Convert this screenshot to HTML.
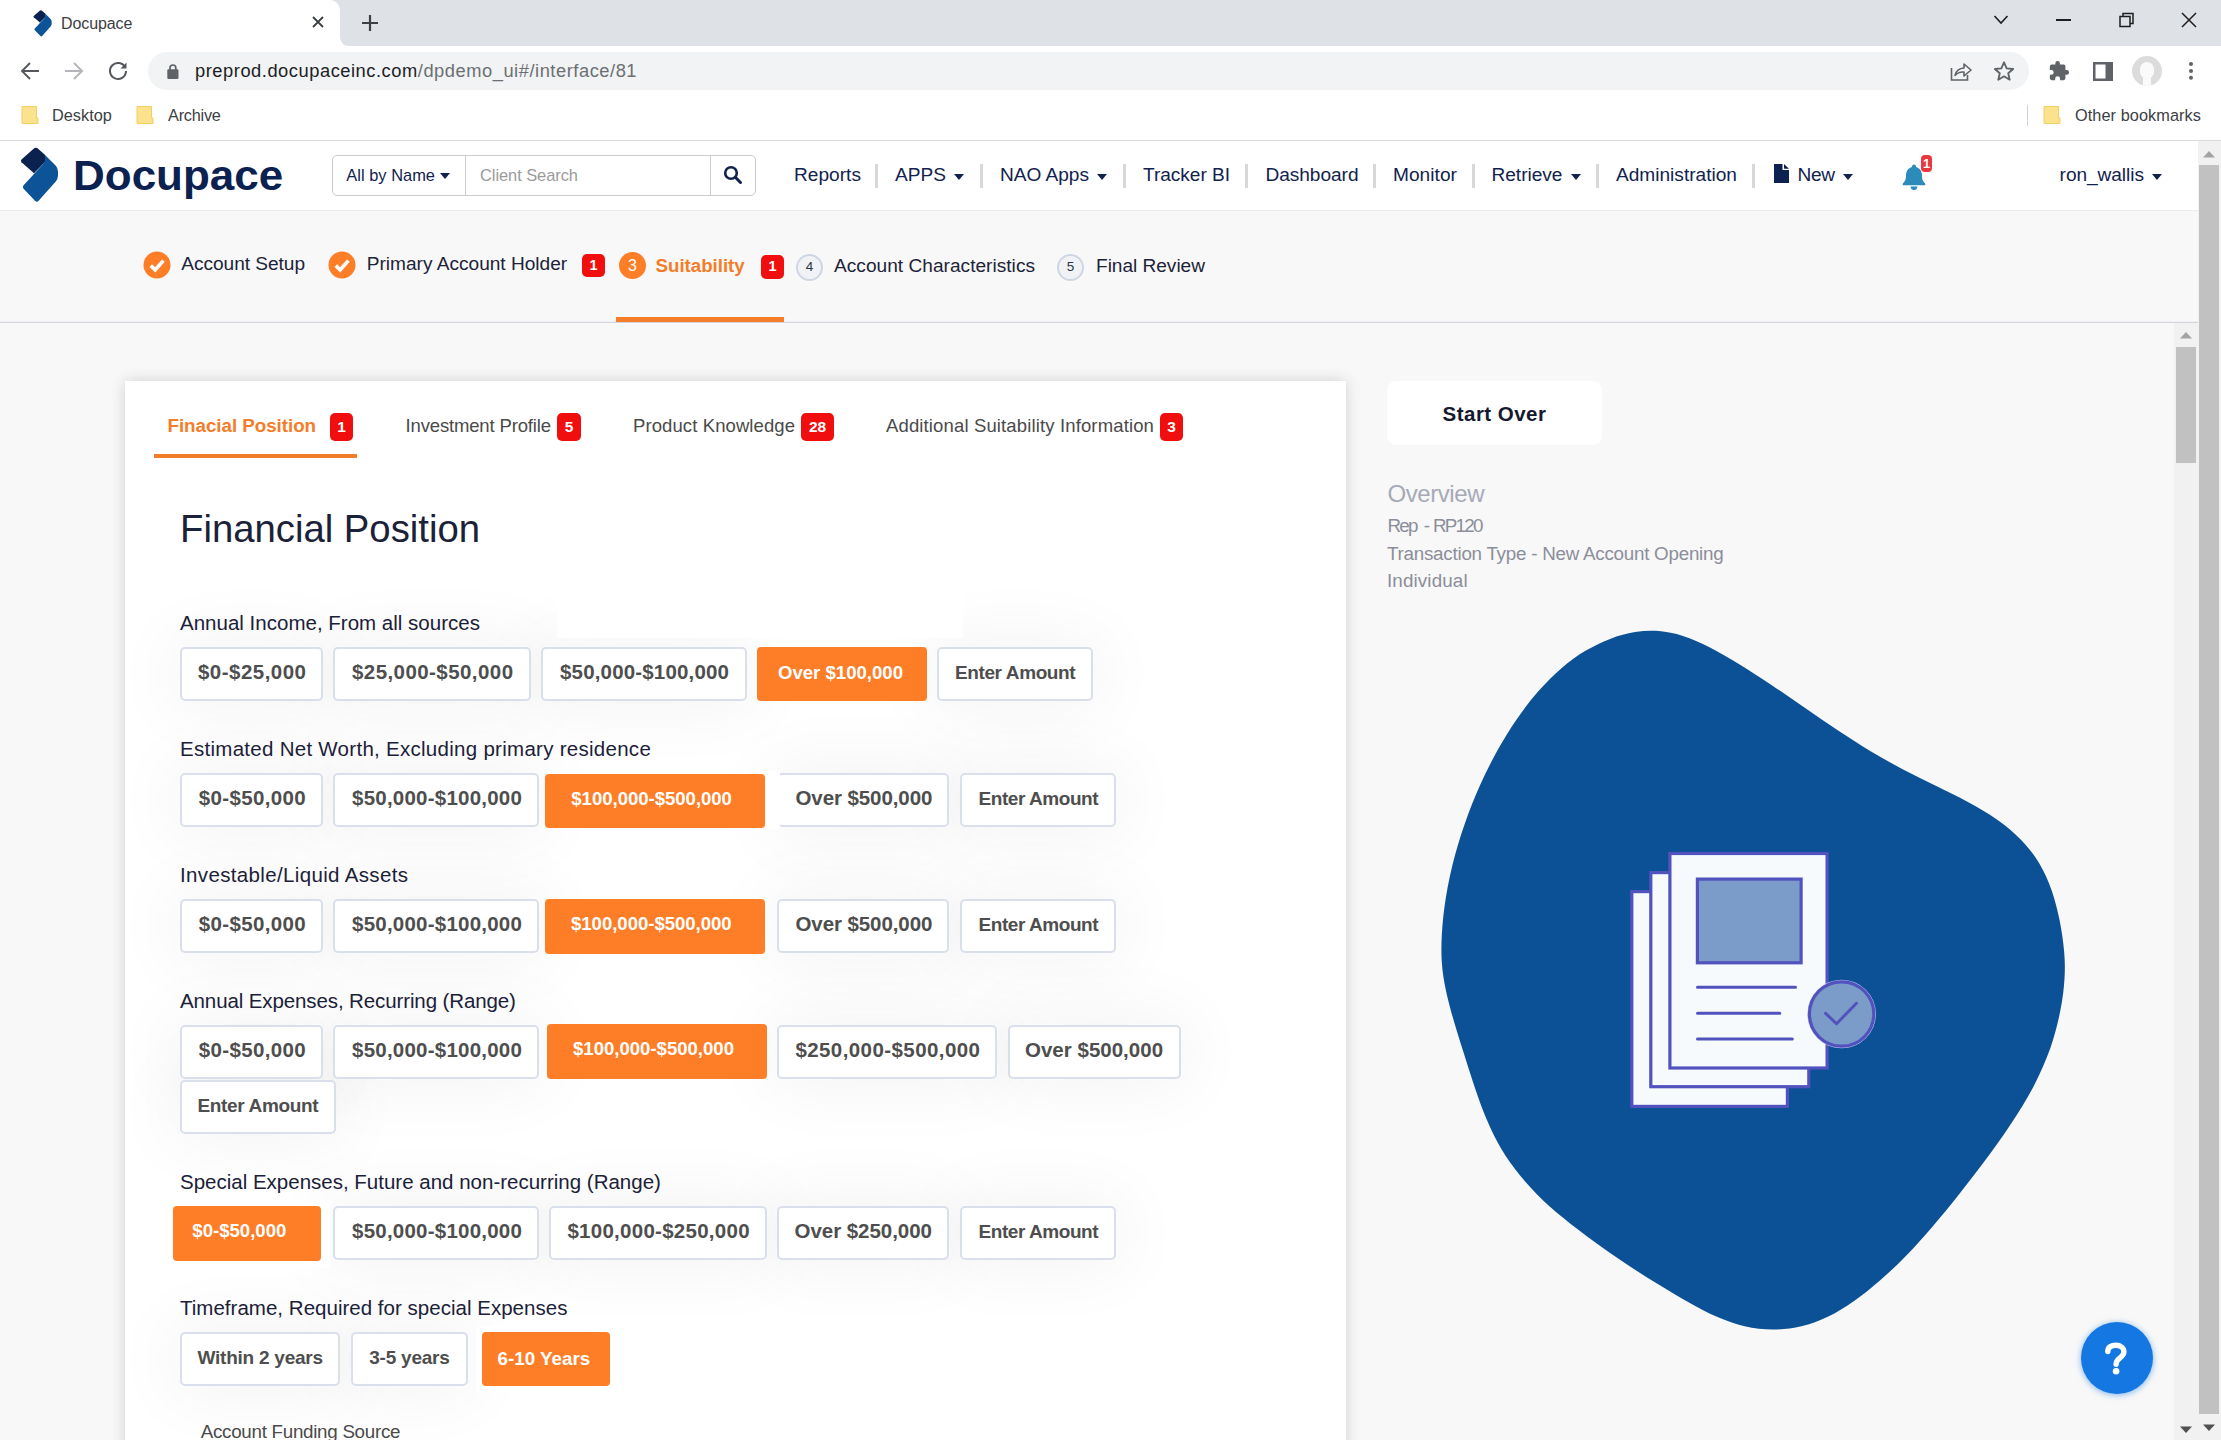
<!DOCTYPE html>
<html>
<head>
<meta charset="utf-8">
<title>Docupace</title>
<style>
*{box-sizing:border-box;margin:0;padding:0}
html,body{width:2221px;height:1440px;overflow:hidden;background:#f8f8f8;font-family:"Liberation Sans",sans-serif;}
.a{position:absolute;white-space:nowrap}
#root{position:absolute;left:0;top:0;width:2221px;height:1440px;overflow:hidden;background:#f8f8f8}
#tabbar{left:0;top:0;width:2221px;height:46.5px;background:#dee1e6}
#tab{left:0;top:0;width:340px;height:47px;background:#fff;border-radius:0 10px 0 0}
#toolbar{left:0;top:46px;width:2221px;height:94px;background:#fff}
#urlpill{left:148px;top:52px;width:1881px;height:38px;border-radius:19px;background:#f1f3f4}
#hdr{left:0;top:141px;width:2198px;height:69px;background:#fff}
.sep{width:2.5px;height:24px;top:163.5px;background:#d8d8d8}
.caret{width:0;height:0;border-left:5.5px solid transparent;border-right:5.5px solid transparent;border-top:6px solid #11224d}
.badge{background:#f00e0e;color:#fff;font-weight:bold;border-radius:5px;text-align:center}
#card{left:125px;top:381px;width:1221px;height:1100px;background:#fff;box-shadow:0 0 14px rgba(0,0,0,.16)}
.b{border:2px solid #d9dfeb;border-radius:5px;background:#fff;color:#4e4e4e;font-weight:bold;text-align:left;}
.sh{border-radius:5px;box-shadow:0 0 70px 8px rgba(0,0,0,.05)}
.o{border-radius:4px;background:#fd7e27;color:#fff;font-weight:bold;text-align:left}
</style>
</head>
<body>
<div id="root">

<div class="a" id="tabbar"></div>
<div class="a" id="tab"></div>
<svg class="a" style="left:340px;top:36px" width="10" height="10"><path d="M0 10 L0 0 Q0 10 10 10 Z" fill="#fff"/></svg>
<svg class="a" style="left:33.200px;top:10px" width="19.200" height="27.200" viewBox="20.500 147.500 38 55.500"><path d="M21.5 159.600 L33.600 148.800 Q36 146.800 38.400 148.900 L44.500 154.600 Q47.200 158.500 44.600 162.400 L34 173.200 L21.500 162.200 Q20.200 160.900 21.500 159.600 Z" fill="#0b2150"/><path d="M41 151 L55.800 165.800 Q58 168.200 58 171.500 L58 175.500 Q58 178.800 55.800 181.400 L38.600 200.800 Q36.800 202.800 35 200.800 L23.600 188.800 Q22 187 23.600 185.200 L43 164.200 Q47.500 158.500 43.500 153.500 Z" fill="#0c5497"/></svg>
<div class="a" style="left:61px;top:13.71px;font-size:16px;line-height:20px;color:#3c4043;letter-spacing:-0.09px;">Docupace</div>

<svg class="a" style="left:311px;top:15px" width="14" height="14"><path d="M2 2 L12 12 M12 2 L2 12" stroke="#3c4043" stroke-width="1.8" fill="none"/></svg>
<svg class="a" style="left:361px;top:14px" width="18" height="18"><path d="M9 1 V17 M1 9 H17" stroke="#3c4043" stroke-width="2.2" fill="none"/></svg>
<svg class="a" style="left:1993px;top:14px" width="16" height="12"><path d="M1.5 2 L8 9 L14.5 2" stroke="#1f1f1f" stroke-width="1.6" fill="none"/></svg>
<div class="a" style="left:2056px;top:19.200px;width:14.500px;height:1.600px;background:#1f1f1f"></div>
<svg class="a" style="left:2119px;top:12px" width="16" height="16"><path d="M1 4.5 H11 V14.500 H1 Z M4 4.500 V1.500 H14 V11.500 H11" stroke="#1f1f1f" stroke-width="1.5" fill="none"/></svg>
<svg class="a" style="left:2181px;top:12px" width="16" height="16"><path d="M1 1 L15 15 M15 1 L1 15" stroke="#1f1f1f" stroke-width="1.5" fill="none"/></svg>
<div class="a" id="toolbar"></div>
<svg class="a" style="left:20px;top:61px" width="20" height="20"><path d="M19 10 H2.5 M10 2 L2 10 L10 18" stroke="#55585c" stroke-width="1.900" fill="none"/></svg>
<svg class="a" style="left:64px;top:61px" width="20" height="20"><path d="M1 10 H17.500 M10 2 L18 10 L10 18" stroke="#b4b6b9" stroke-width="2" fill="none"/></svg>
<svg class="a" style="left:107px;top:60px" width="22" height="22" viewBox="0 0 22 22"><path d="M18.200 7.500 A8 8 0 1 0 19 11" stroke="#55585c" stroke-width="2" fill="none"/><path d="M19.500 2.500 V8.500 H13.500 Z" fill="#55585c"/></svg>
<div class="a" id="urlpill"></div>
<svg class="a" style="left:166.500px;top:64px" width="12" height="16" viewBox="0 0 12 16"><rect x="0.300" y="5.300" width="11.200" height="9.700" rx="1.300" fill="#5f6368"/><path d="M3 6 V3.900 A2.900 2.900 0 0 1 8.800 3.900 V6" stroke="#5f6368" stroke-width="1.700" fill="none"/></svg>
<div class="a" style="left:195px;top:59.66px;font-size:18.3px;line-height:22px;color:#202124;letter-spacing:0.54px">preprod.docupaceinc.com<span style="color:#6b6f73">/dpdemo_ui#/interface/81</span></div>

<svg class="a" style="left:1950px;top:60.300px" width="22" height="22" viewBox="0 0 22 22"><path d="M1.500 8 V20 H17.500 V15" stroke="#5f6368" stroke-width="1.600" fill="none"/><path d="M5 15.500 Q6.500 8.500 14 8 V4 L21 10 L14 16 V12 Q8.500 11.500 5 15.500 Z" stroke="#5f6368" stroke-width="1.600" fill="none" stroke-linejoin="round"/></svg>
<svg class="a" style="left:1993px;top:60px" width="22" height="22" viewBox="0 0 24 24"><path d="M12 2.500 L14.900 9.100 L22 9.800 L16.600 14.500 L18.200 21.500 L12 17.800 L5.800 21.500 L7.400 14.500 L2 9.800 L9.100 9.100 Z" stroke="#5f6368" stroke-width="2" fill="none" stroke-linejoin="round"/></svg>
<svg class="a" style="left:2048px;top:60px" width="22" height="22" viewBox="0 0 24 24"><path d="M20.500 11 H19 V7 a2 2 0 0 0 -2 -2 h-4 V3.500 a2.500 2.500 0 0 0 -5 0 V5 H4 a2 2 0 0 0 -2 2 v3.800 h1.500 a2.700 2.700 0 0 1 0 5.400 H2 V20 a2 2 0 0 0 2 2 h3.800 v-1.500 a2.700 2.700 0 0 1 5.400 0 V22 H17 a2 2 0 0 0 2 -2 v-4 h1.500 a2.500 2.500 0 0 0 0 -5 z" fill="#5f6368"/></svg>
<svg class="a" style="left:2093px;top:62px" width="20" height="19"><rect x="1.250" y="1.250" width="17.500" height="16.500" stroke="#5f6368" stroke-width="2.500" fill="none"/><rect x="12.500" y="1" width="6.500" height="17" fill="#5f6368"/></svg>
<div class="a" style="left:2132px;top:56px;width:30px;height:30px;border-radius:15px;background:#dcdcdc;overflow:hidden"><div class="a" style="left:8px;top:6px;width:14px;height:16px;border-radius:7px 7px 6px 6px;background:#fafafa"></div><div class="a" style="left:11px;top:18px;width:8px;height:14px;background:#fafafa"></div></div>
<div class="a" style="left:2188.900px;top:62.100px;width:4.200px;height:4.200px;border-radius:2.100px;background:#5f6368;box-shadow:0 6.900px 0 #5f6368,0 13.800px 0 #5f6368"></div>
<svg class="a" style="left:21px;top:105px" width="18" height="20"><path d="M1 1.500 H15.500 V13 H17 V18.500 H1 Z" fill="#fbe28d" stroke="#f1cf63" stroke-width="1"/></svg>
<div class="a" style="left:52px;top:105.1px;font-size:16.3px;line-height:20px;color:#3c4043;letter-spacing:0.03px;">Desktop</div>

<svg class="a" style="left:136px;top:105px" width="18" height="20"><path d="M1 1.500 H15.500 V13 H17 V18.500 H1 Z" fill="#fbe28d" stroke="#f1cf63" stroke-width="1"/></svg>
<div class="a" style="left:168px;top:105.1px;font-size:16.3px;line-height:20px;color:#3c4043;letter-spacing:-0.23px;">Archive</div>

<div class="a" style="left:2027px;top:105px;width:1px;height:21px;background:#d0d2d6"></div>
<svg class="a" style="left:2043px;top:105px" width="18" height="20"><path d="M1 1.500 H15.500 V13 H17 V18.500 H1 Z" fill="#fbe28d" stroke="#f1cf63" stroke-width="1"/></svg>
<div class="a" style="left:2075px;top:105.1px;font-size:16.3px;line-height:20px;color:#3c4043;letter-spacing:0.07px;">Other bookmarks</div>

<div class="a" style="left:0;top:140px;width:2221px;height:1px;background:#dadada"></div>

<div class="a" id="hdr"></div>
<div class="a" style="left:0;top:210px;width:2198px;height:1px;background:#ebebeb"></div>
<svg class="a" style="left:18px;top:145px" width="44" height="62" viewBox="18 145 44 62"><path d="M21.5 159.600 L33.600 148.800 Q36 146.800 38.400 148.900 L44.500 154.600 Q47.200 158.500 44.600 162.400 L34 173.200 L21.500 162.200 Q20.200 160.900 21.500 159.600 Z" fill="#0b2150"/><path d="M41 151 L55.800 165.800 Q58 168.200 58 171.500 L58 175.500 Q58 178.800 55.800 181.400 L38.600 200.800 Q36.800 202.800 35 200.800 L23.600 188.800 Q22 187 23.600 185.200 L43 164.200 Q47.500 158.500 43.500 153.500 Z" fill="#0c5497"/></svg>
<div class="a" style="left:72.5px;top:151.8px;font-size:41.7px;line-height:48px;font-weight:bold;color:#0b2150;transform-origin:0 50%;transform:scaleX(1.055)">Docupace</div>
<div class="a" style="left:332px;top:155px;width:424px;height:41px;border:1px solid #ccc;border-radius:5px;background:#fff"></div>
<div class="a" style="left:465px;top:155px;width:1px;height:41px;background:#ccc"></div>
<div class="a" style="left:710px;top:155px;width:1px;height:41px;background:#ccc"></div>
<div class="a" style="left:346.3px;top:165.12px;font-size:16.4px;line-height:20px;color:#11224d;letter-spacing:0.03px;">All by Name</div>

<div class="a caret" style="left:440px;top:173px;border-left-width:5px;border-right-width:5px"></div>
<div class="a" style="left:480px;top:165.12px;font-size:16.4px;line-height:20px;color:#9a9a9a;letter-spacing:-0.04px;">Client Search</div>

<svg class="a" style="left:723px;top:165px" width="20" height="20" viewBox="0 0 20 20"><circle cx="8" cy="8" r="5.800" stroke="#11224d" stroke-width="2.600" fill="none"/><path d="M12.300 12.300 L17.500 17.500" stroke="#11224d" stroke-width="3" stroke-linecap="round"/></svg>
<div class="a" style="left:794px;top:163.38px;font-size:19.1px;line-height:24px;color:#11224d;letter-spacing:0.02px;">Reports</div>
<div class="a sep" style="left:875px"></div>
<div class="a" style="left:895px;top:163.38px;font-size:19.1px;line-height:24px;color:#11224d;letter-spacing:0.02px;">APPS</div>
<div class="a caret" style="left:954px;top:174px"></div>
<div class="a sep" style="left:980px"></div>
<div class="a" style="left:1000px;top:163.38px;font-size:19.1px;line-height:24px;color:#11224d;letter-spacing:-0.02px;">NAO Apps</div>
<div class="a caret" style="left:1097px;top:174px"></div>
<div class="a sep" style="left:1123px"></div>
<div class="a" style="left:1143px;top:163.38px;font-size:19.1px;line-height:24px;color:#11224d;letter-spacing:-0.04px;">Tracker BI</div>
<div class="a sep" style="left:1245px"></div>
<div class="a" style="left:1265.5px;top:163.38px;font-size:19.1px;line-height:24px;color:#11224d;letter-spacing:-0.05px;">Dashboard</div>
<div class="a sep" style="left:1373px"></div>
<div class="a" style="left:1393px;top:163.38px;font-size:19.1px;line-height:24px;color:#11224d;letter-spacing:0.05px;">Monitor</div>
<div class="a sep" style="left:1472px"></div>
<div class="a" style="left:1491.5px;top:163.38px;font-size:19.1px;line-height:24px;color:#11224d;letter-spacing:-0.02px;">Retrieve</div>
<div class="a caret" style="left:1571px;top:174px"></div>
<div class="a sep" style="left:1596px"></div>
<div class="a" style="left:1616px;top:163.38px;font-size:19.1px;line-height:24px;color:#11224d;letter-spacing:-0px;">Administration</div>
<div class="a sep" style="left:1752px"></div>
<svg class="a" style="left:1774px;top:164px" width="15" height="19" viewBox="0 0 15 19"><path d="M0 0 H8.500 V6 H15 V19 H0 Z M10 0 L15 4.800 H10 Z" fill="#0b2150"/></svg>
<div class="a" style="left:1797.6px;top:163.38px;font-size:19.1px;line-height:24px;color:#11224d;letter-spacing:-0.41px;">New</div>
<div class="a caret" style="left:1843px;top:174px"></div>
<svg class="a" style="left:1902px;top:164px" width="24" height="26" viewBox="0 0 24 26"><path d="M12 0.500 a2 2 0 0 1 2 2 v0.600 c3.800 1 6 4.200 6 8.400 c0 4.500 1.300 6.200 3 7.800 q0.800 0.900 0 2 H1 q-0.800 -1.100 0 -2 c1.700 -1.600 3 -3.300 3 -7.800 c0 -4.200 2.200 -7.400 6 -8.400 v-0.600 a2 2 0 0 1 2 -2 z M8.600 22.500 h6.800 a3.400 3.400 0 0 1 -6.800 0 z" fill="#2b8cba"/></svg>
<div class="a" style="left:1921px;top:155px;width:11px;height:17px;border-radius:4px;background:#e9383f;color:#fff;font-weight:bold;font-size:13px;line-height:17px;text-align:center">1</div>
<div class="a" style="left:2059.6px;top:163.38px;font-size:19.1px;line-height:24px;color:#11224d;letter-spacing:-0.06px;">ron_wallis</div>
<div class="a caret" style="left:2152px;top:174px"></div>
<svg class="a" style="left:143px;top:251px" width="28" height="28" viewBox="0 0 28 28"><circle cx="14" cy="14" r="13.500" fill="#fd7e27"/><path d="M7.800 14.600 L12.200 18.800 L20.400 9.600" stroke="#fff" stroke-width="3.600" fill="none"/></svg>
<div class="a" style="left:181.3px;top:251.78px;font-size:19.1px;line-height:24px;color:#1d2339;letter-spacing:-0.04px;">Account Setup</div>
<svg class="a" style="left:328px;top:251px" width="28" height="28" viewBox="0 0 28 28"><circle cx="14" cy="14" r="13.500" fill="#fd7e27"/><path d="M7.800 14.600 L12.200 18.800 L20.400 9.600" stroke="#fff" stroke-width="3.600" fill="none"/></svg>
<div class="a" style="left:366.8px;top:251.78px;font-size:19.1px;line-height:24px;color:#1d2339;letter-spacing:-0.01px;">Primary Account Holder</div>
<div class="a badge" style="left:582px;top:253.500px;width:23px;height:23.500px;font-size:14.500px;line-height:23px">1</div>
<div class="a" style="left:619px;top:251.700px;width:27px;height:27px;border-radius:14px;background:#fd7e27;color:#fff;font-size:16px;line-height:27px;text-align:center">3</div>
<div class="a" style="left:655.6px;top:254.12px;font-size:18.7px;line-height:24px;color:#f47d2a;letter-spacing:-0.02px;font-weight:bold;">Suitability</div>
<div class="a badge" style="left:761px;top:255.300px;width:23px;height:24px;font-size:14.500px;line-height:23.500px">1</div>
<div class="a" style="left:796px;top:254px;width:27px;height:27px;border-radius:14px;border:2.500px solid #cfd6e3;background:#f0f2f5;color:#2c3242;font-size:13.500px;line-height:22px;text-align:center">4</div>
<div class="a" style="left:834px;top:253.98px;font-size:19.1px;line-height:24px;color:#1d2339;letter-spacing:0.02px;">Account Characteristics</div>
<div class="a" style="left:1057px;top:254px;width:27px;height:27px;border-radius:14px;border:2.500px solid #cfd6e3;background:#f0f2f5;color:#2c3242;font-size:13.500px;line-height:22px;text-align:center">5</div>
<div class="a" style="left:1096px;top:253.98px;font-size:19.1px;line-height:24px;color:#1d2339;letter-spacing:-0.03px;">Final Review</div>
<div class="a" style="left:0;top:321px;width:2198px;height:1px;background:#eef0f3"></div><div class="a" style="left:0;top:322px;width:2198px;height:1px;background:#d3d5e0"></div>
<div class="a" style="left:616px;top:317px;width:168px;height:5px;background:#f47d2a"></div>
<div class="a" id="card"></div>
<div class="a sh" style="left:180px;top:647px;width:143px;height:54px"></div>
<div class="a sh" style="left:333px;top:647px;width:198px;height:54px"></div>
<div class="a sh" style="left:541px;top:647px;width:206px;height:54px"></div>
<div class="a sh" style="left:937px;top:647px;width:156px;height:54px"></div>
<div class="a sh" style="left:180px;top:773px;width:143px;height:54px"></div>
<div class="a sh" style="left:333px;top:773px;width:206px;height:54px"></div>
<div class="a sh" style="left:777px;top:773px;width:172px;height:54px"></div>
<div class="a sh" style="left:960px;top:773px;width:156px;height:54px"></div>
<div class="a sh" style="left:180px;top:899px;width:143px;height:54px"></div>
<div class="a sh" style="left:333px;top:899px;width:206px;height:54px"></div>
<div class="a sh" style="left:777px;top:899px;width:172px;height:54px"></div>
<div class="a sh" style="left:960px;top:899px;width:156px;height:54px"></div>
<div class="a sh" style="left:180px;top:1025px;width:143px;height:54px"></div>
<div class="a sh" style="left:333px;top:1025px;width:206px;height:54px"></div>
<div class="a sh" style="left:777px;top:1025px;width:220px;height:54px"></div>
<div class="a sh" style="left:1008px;top:1025px;width:173px;height:54px"></div>
<div class="a sh" style="left:180px;top:1080px;width:156px;height:54px"></div>
<div class="a sh" style="left:333px;top:1206px;width:206px;height:54px"></div>
<div class="a sh" style="left:549px;top:1206px;width:218px;height:54px"></div>
<div class="a sh" style="left:777px;top:1206px;width:172px;height:54px"></div>
<div class="a sh" style="left:960px;top:1206px;width:156px;height:54px"></div>
<div class="a sh" style="left:180px;top:1332px;width:160px;height:54px"></div>
<div class="a sh" style="left:351px;top:1332px;width:117px;height:54px"></div>
<div class="a" style="left:557px;top:460px;width:406px;height:178px;background:#fff"></div>
<div class="a" style="left:167.5px;top:414.09px;font-size:18.8px;line-height:24px;color:#f47d2a;letter-spacing:-0.04px;font-weight:bold;">Finacial Position</div>
<div class="a badge" style="left:330px;top:413px;width:23px;height:28px;font-size:15.500px;line-height:27.500px">1</div>
<div class="a" style="left:154.200px;top:454px;width:203px;height:3.600px;background:#f47d2a"></div>
<div class="a" style="left:405.6px;top:413.89px;font-size:18.5px;line-height:24px;color:#4a4a4a;letter-spacing:-0.16px;">Investment Profile</div>
<div class="a badge" style="left:557px;top:413px;width:24px;height:28px;font-size:15.500px;line-height:27.500px">5</div>
<div class="a" style="left:633px;top:413.89px;font-size:18.5px;line-height:24px;color:#4a4a4a;letter-spacing:0.1px;">Product Knowledge</div>
<div class="a badge" style="left:801px;top:413px;width:33px;height:28px;font-size:15.500px;line-height:27.500px">28</div>
<div class="a" style="left:886px;top:413.89px;font-size:18.5px;line-height:24px;color:#4a4a4a;letter-spacing:0.14px;">Additional Suitability Information</div>
<div class="a badge" style="left:1160px;top:413px;width:23px;height:28px;font-size:15.500px;line-height:27.500px">3</div>
<div class="a" style="left:180px;top:505.33px;font-size:38.3px;line-height:48px;color:#1b2138;letter-spacing:-0.01px;">Financial Position</div>
<div class="a" style="left:180px;top:609.9px;font-size:20.5px;line-height:26px;color:#1b2138;letter-spacing:0.01px;">Annual Income, From all sources</div>
<div class="a b" style="left:180px;top:647px;width:143px;height:54px;font-size:20.5px;line-height:46.19px;letter-spacing:0.47px;padding-left:16px">$0-$25,000</div>
<div class="a b" style="left:333px;top:647px;width:198px;height:54px;font-size:20.5px;line-height:46.19px;letter-spacing:0.43px;padding-left:17px">$25,000-$50,000</div>
<div class="a b" style="left:541px;top:647px;width:206px;height:54px;font-size:20.5px;line-height:46.19px;letter-spacing:0.17px;padding-left:17px">$50,000-$100,000</div>
<div class="a o" style="left:757px;top:647px;width:170px;height:54px;line-height:51.11px;font-size:18.6px;letter-spacing:-0.01px;padding-left:21px">Over $100,000</div>
<div class="a b" style="left:937px;top:647px;width:156px;height:54px;font-size:19px;line-height:47.23px;letter-spacing:-0.39px;padding-left:16px">Enter Amount</div>
<div class="a" style="left:180px;top:735.9px;font-size:20.5px;line-height:26px;color:#1b2138;letter-spacing:0.28px;">Estimated Net Worth, Excluding primary residence</div>
<div class="a b" style="left:180px;top:773px;width:143px;height:54px;font-size:20.5px;line-height:46.19px;letter-spacing:0.34px;padding-left:16.8px">$0-$50,000</div>
<div class="a b" style="left:333px;top:773px;width:206px;height:54px;font-size:20.5px;line-height:46.19px;letter-spacing:0.23px;padding-left:17px">$50,000-$100,000</div>
<div class="a b" style="left:777px;top:773px;width:172px;height:54px;font-size:20.5px;line-height:46.19px;letter-spacing:-0.09px;padding-left:16.5px">Over $500,000</div>
<div class="a b" style="left:960px;top:773px;width:156px;height:54px;font-size:19px;line-height:47.23px;letter-spacing:-0.45px;padding-left:16.6px">Enter Amount</div>
<div class="a" style="left:765px;top:771px;width:15px;height:58px;background:#fff"></div>
<div class="a o" style="left:545px;top:774px;width:220px;height:54px;line-height:50.51px;font-size:18.6px;letter-spacing:-0.04px;padding-left:26.3px">$100,000-$500,000</div>
<div class="a" style="left:180px;top:861.9px;font-size:20.5px;line-height:26px;color:#1b2138;letter-spacing:0.35px;">Investable/Liquid Assets</div>
<div class="a b" style="left:180px;top:899px;width:143px;height:54px;font-size:20.5px;line-height:46.19px;letter-spacing:0.34px;padding-left:16.8px">$0-$50,000</div>
<div class="a b" style="left:333px;top:899px;width:206px;height:54px;font-size:20.5px;line-height:46.19px;letter-spacing:0.23px;padding-left:17px">$50,000-$100,000</div>
<div class="a o" style="left:545px;top:899px;width:220px;height:55px;line-height:50.51px;font-size:18.6px;letter-spacing:-0.04px;padding-left:26px">$100,000-$500,000</div>
<div class="a b" style="left:777px;top:899px;width:172px;height:54px;font-size:20.5px;line-height:46.19px;letter-spacing:-0.09px;padding-left:16.5px">Over $500,000</div>
<div class="a b" style="left:960px;top:899px;width:156px;height:54px;font-size:19px;line-height:47.23px;letter-spacing:-0.45px;padding-left:16.6px">Enter Amount</div>
<div class="a" style="left:180px;top:987.9px;font-size:20.5px;line-height:26px;color:#1b2138;letter-spacing:-0.11px;">Annual Expenses, Recurring (Range)</div>
<div class="a b" style="left:180px;top:1025px;width:143px;height:54px;font-size:20.5px;line-height:46.19px;letter-spacing:0.34px;padding-left:16.8px">$0-$50,000</div>
<div class="a b" style="left:333px;top:1025px;width:206px;height:54px;font-size:20.5px;line-height:46.19px;letter-spacing:0.23px;padding-left:17px">$50,000-$100,000</div>
<div class="a o" style="left:547px;top:1024px;width:220px;height:55px;line-height:50.51px;font-size:18.6px;letter-spacing:-0.02px;padding-left:26px">$100,000-$500,000</div>
<div class="a b" style="left:777px;top:1025px;width:220px;height:54px;font-size:20.5px;line-height:46.19px;letter-spacing:0.42px;padding-left:16.4px">$250,000-$500,000</div>
<div class="a b" style="left:1008px;top:1025px;width:173px;height:54px;font-size:20.5px;line-height:46.19px;letter-spacing:0.01px;padding-left:15px">Over $500,000</div>
<div class="a b" style="left:180px;top:1080px;width:156px;height:54px;font-size:19px;line-height:47.23px;letter-spacing:-0.34px;padding-left:15.5px">Enter Amount</div>
<div class="a" style="left:180px;top:1168.9px;font-size:20.5px;line-height:26px;color:#1b2138;letter-spacing:0px;">Special Expenses, Future and non-recurring (Range)</div>
<div class="a" style="left:167px;top:1200px;width:163px;height:68px;background:#fff"></div>
<div class="a o" style="left:173px;top:1206px;width:148px;height:55px;line-height:50.51px;font-size:18.6px;letter-spacing:-0px;padding-left:19.3px">$0-$50,000</div>
<div class="a b" style="left:333px;top:1206px;width:206px;height:54px;font-size:20.5px;line-height:46.19px;letter-spacing:0.23px;padding-left:17px">$50,000-$100,000</div>
<div class="a b" style="left:549px;top:1206px;width:218px;height:54px;font-size:20.5px;line-height:46.19px;letter-spacing:0.27px;padding-left:16.4px">$100,000-$250,000</div>
<div class="a b" style="left:777px;top:1206px;width:172px;height:54px;font-size:20.5px;line-height:46.19px;letter-spacing:-0.04px;padding-left:15.5px">Over $250,000</div>
<div class="a b" style="left:960px;top:1206px;width:156px;height:54px;font-size:19px;line-height:47.23px;letter-spacing:-0.45px;padding-left:16.6px">Enter Amount</div>
<div class="a" style="left:180px;top:1294.9px;font-size:20.5px;line-height:26px;color:#1b2138;letter-spacing:0.02px;">Timeframe, Required for special Expenses</div>
<div class="a" style="left:476px;top:1326px;width:144px;height:66px;background:#fff"></div>
<div class="a b" style="left:180px;top:1332px;width:160px;height:54px;font-size:19px;line-height:47.23px;letter-spacing:-0.24px;padding-left:15.5px">Within 2 years</div>
<div class="a b" style="left:351px;top:1332px;width:117px;height:54px;font-size:19px;line-height:47.23px;letter-spacing:-0.24px;padding-left:16.3px">3-5 years</div>
<div class="a o" style="left:482px;top:1332px;width:128px;height:54px;line-height:54.57px;font-size:18.8px;letter-spacing:-0px;padding-left:15.6px">6-10 Years</div>
<div class="a" style="left:200.7px;top:1419.49px;font-size:18.8px;line-height:26px;color:#4a4a4a;letter-spacing:-0.28px;">Account Funding Source</div>
<div class="a" style="left:1387px;top:381px;width:215px;height:64px;border-radius:9px;background:#fff"></div>
<div class="a" style="left:1442.6px;top:400.9px;font-size:20.5px;line-height:26px;color:#14192d;letter-spacing:0.47px;font-weight:bold;">Start Over</div>
<div class="a" style="left:1387.5px;top:480.28px;font-size:24px;line-height:28px;color:#a6aab7;letter-spacing:-0.43px;">Overview</div>
<div class="a" style="left:1387.5px;top:514.49px;font-size:18.8px;line-height:24px;color:#8b8e9a;letter-spacing:-1.75px;">Rep</div>
<div class="a" style="left:1423.8px;top:514.49px;font-size:18.8px;line-height:24px;color:#8b8e9a;letter-spacing:-1.06px;">-</div>
<div class="a" style="left:1433px;top:514.49px;font-size:18.8px;line-height:24px;color:#8b8e9a;letter-spacing:-1.75px;">RP120</div>
<div class="a" style="left:1387px;top:541.99px;font-size:18.8px;line-height:24px;color:#8b8e9a;letter-spacing:-0.24px;">Transaction Type - New Account Opening</div>
<div class="a" style="left:1387px;top:569.49px;font-size:18.8px;line-height:24px;color:#8b8e9a;letter-spacing:0.14px;">Individual</div>
<svg class="a" style="left:1400px;top:600px" width="720" height="760" viewBox="1400 600 720 760">
<path fill="#0c5195" d="M1441.5 942.8 C1441.8 932.3 1442.7 919.6 1444.5 906.7 C1446.3 893.7 1449.0 879.0 1452.4 865.3 C1455.7 851.5 1460.1 837.2 1464.7 824.0 C1469.3 810.7 1474.5 797.8 1479.9 785.6 C1485.3 773.5 1491.0 762.1 1497.1 751.1 C1503.2 740.0 1509.7 729.4 1516.6 719.4 C1523.5 709.4 1530.9 699.8 1538.3 691.3 C1545.8 682.7 1553.4 675.1 1561.2 668.4 C1569.0 661.7 1576.9 656.1 1585.0 651.1 C1593.2 646.2 1601.7 642.1 1610.1 638.9 C1618.4 635.8 1626.9 633.4 1635.0 632.1 C1643.1 630.8 1650.8 630.4 1658.8 631.0 C1666.8 631.6 1674.4 633.2 1683.0 636.0 C1691.5 638.7 1700.4 642.7 1710.0 647.5 C1719.6 652.4 1730.0 658.6 1740.5 665.0 C1751.0 671.4 1762.0 678.7 1772.9 685.9 C1783.7 693.1 1794.6 700.8 1805.5 708.3 C1816.3 715.7 1827.2 723.4 1838.1 730.6 C1848.9 737.7 1859.8 744.8 1870.6 751.3 C1881.5 757.7 1892.3 763.7 1903.1 769.5 C1914.0 775.2 1924.9 780.4 1935.7 785.8 C1946.5 791.3 1957.6 796.4 1967.9 802.1 C1978.3 807.8 1988.7 813.6 1997.6 820.0 C2006.5 826.3 2014.5 833.0 2021.4 840.2 C2028.4 847.4 2034.2 854.9 2039.2 863.3 C2044.2 871.7 2048.2 880.7 2051.7 890.4 C2055.1 900.0 2057.7 911.0 2059.8 921.2 C2061.8 931.4 2063.3 941.7 2064.1 951.3 C2064.9 960.9 2065.1 968.7 2064.5 978.6 C2063.9 988.6 2062.7 999.2 2060.3 1010.8 C2058.0 1022.4 2054.8 1035.5 2050.3 1048.2 C2045.8 1060.9 2039.9 1074.1 2033.3 1087.0 C2026.6 1099.8 2018.3 1112.8 2010.2 1125.1 C2002.1 1137.5 1993.3 1149.5 1984.7 1161.1 C1976.1 1172.7 1967.4 1183.8 1958.7 1194.7 C1950.0 1205.6 1941.3 1216.3 1932.6 1226.4 C1924.0 1236.5 1915.3 1246.3 1906.6 1255.2 C1897.9 1264.2 1889.2 1272.4 1880.5 1280.0 C1871.8 1287.6 1863.1 1294.6 1854.4 1300.7 C1845.7 1306.8 1837.1 1312.2 1828.3 1316.5 C1819.4 1320.8 1810.5 1324.1 1801.3 1326.2 C1792.1 1328.4 1782.4 1329.5 1773.0 1329.5 C1763.6 1329.5 1754.0 1328.4 1744.7 1326.3 C1735.5 1324.3 1726.7 1321.1 1717.5 1317.1 C1708.2 1313.2 1699.2 1308.2 1689.4 1302.7 C1679.5 1297.3 1669.1 1291.0 1658.6 1284.5 C1648.1 1278.1 1637.1 1271.2 1626.3 1264.1 C1615.6 1256.9 1604.5 1249.3 1594.0 1241.6 C1583.5 1234.0 1572.9 1226.0 1563.4 1218.1 C1553.8 1210.1 1544.7 1202.2 1536.6 1193.9 C1528.5 1185.7 1521.1 1177.3 1514.6 1168.6 C1508.0 1159.9 1502.4 1151.0 1497.3 1141.7 C1492.2 1132.4 1488.0 1122.8 1484.0 1113.0 C1480.0 1103.2 1476.7 1093.1 1473.3 1083.0 C1469.9 1072.9 1466.6 1062.4 1463.5 1052.3 C1460.3 1042.2 1457.1 1032.0 1454.3 1022.4 C1451.5 1012.9 1448.9 1003.6 1446.9 994.9 C1445.0 986.1 1443.4 978.8 1442.5 970.1 C1441.6 961.4 1441.2 953.4 1441.5 942.8 Z"/>
<g stroke="#5252bf" stroke-width="3.2" fill="#f7fafc">
<rect x="1631.8" y="891.6" width="155.600" height="214.800"/>
<rect x="1650.800" y="872.600" width="158" height="214.100"/>
<rect x="1669.900" y="853.500" width="157.200" height="214.500"/>
<rect x="1697.400" y="879.100" width="103.700" height="83.700" fill="#7b9cc8"/>
<path d="M1697.500 987.300 H1795.500 M1697.500 1013.300 H1779.800 M1697.500 1039 H1792.300" fill="none" stroke-width="3" stroke-linecap="round"/>
</g>
<circle cx="1841.600" cy="1014" r="34.300" fill="#c9c9f2"/>
<circle cx="1841.600" cy="1014" r="32.200" fill="#7b9cc8" stroke="#5252bf" stroke-width="3.200"/>
<path d="M1825.600 1013.300 L1836.500 1023.750 L1856.500 1003.300" stroke="#5252bf" stroke-width="3" fill="none" stroke-linecap="round" stroke-linejoin="round"/>
</svg>

<div class="a" style="left:2081px;top:1322px;width:72px;height:72px;border-radius:36px;background:#1577e1;box-shadow:0 1px 6px rgba(21,119,225,.55)"></div>
<svg class="a" style="left:2100px;top:1338px" width="34" height="40" viewBox="0 0 34 40"><path d="M7.800 13.600 C7.800 9.200 11.200 7.300 15.800 7.300 C20.600 7.300 23.900 9.900 23.900 13.700 C23.900 17 21.600 18.600 19.400 20.300 C17 22.200 16.100 23.500 16.100 26.300" stroke="#fff" stroke-width="5.400" fill="none" stroke-linecap="round"/><circle cx="16.100" cy="33.300" r="3.300" fill="#fff"/></svg>

<div class="a" style="left:2174px;top:323px;width:24px;height:1117px;background:#f1f1f1"></div>
<div class="a" style="left:2176px;top:347px;width:20px;height:116px;background:#c1c1c1"></div>
<svg class="a" style="left:2180px;top:331px" width="12" height="8"><path d="M0 7.500 L6 1 L12 7.500 Z" fill="#a3a3a3"/></svg>
<svg class="a" style="left:2180px;top:1426px" width="12" height="8"><path d="M0 0.500 L6 7 L12 0.500 Z" fill="#505050"/></svg>
<div class="a" style="left:2198px;top:141px;width:23px;height:1299px;background:#f1f1f1"></div>
<div class="a" style="left:2199px;top:165px;width:20px;height:1249px;background:#c1c1c1"></div>
<svg class="a" style="left:2203px;top:150px" width="12" height="8"><path d="M0 7.500 L6 1 L12 7.500 Z" fill="#a3a3a3"/></svg>
<svg class="a" style="left:2203px;top:1424px" width="12" height="8"><path d="M0 0.500 L6 7 L12 0.500 Z" fill="#505050"/></svg>

</div>
</body>
</html>
